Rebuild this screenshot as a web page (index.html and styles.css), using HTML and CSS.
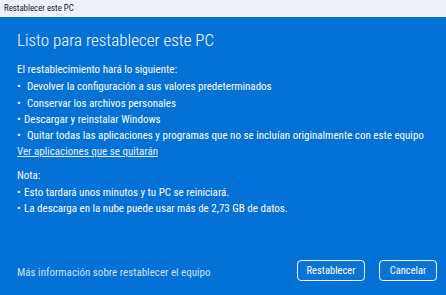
FILE: index.html
```html
<!DOCTYPE html>
<html lang="es">
<head>
<meta charset="utf-8">
<title>Restablecer este PC</title>
<link rel="stylesheet" href="styles.css">
</head>
<body>
	<div class="titlebar">Restablecer este PC</div>
	<div class="dialog">
		<div class="content">
			<h1>Listo para restablecer este PC</h1>
			<p>El restablecimiento hará lo siguiente:</p>
			<ul>
				<li class="wide">Devolver la configuración a sus valores predeterminados</li>
				<li class="wide">Conservar los archivos personales</li>
				<li>Descargar y reinstalar Windows</li>
				<li class="wide">Quitar todas las aplicaciones y programas que no se incluían originalmente con este equipo</li>
			</ul>
			<a class="link" href="#">Ver aplicaciones que se quitarán</a>
			<p class="note">Nota:</p>
			<ul>
				<li>Esto tardará unos minutos y tu PC se reiniciará.</li>
				<li>La descarga en la nube puede usar más de 2,73 GB de datos.</li>
			</ul>
		</div>
		<div class="footer">
			<a class="more" href="#">Más información sobre restablecer el equipo</a>
			<div class="buttons">
				<button class="btn reset">Restablecer</button>
				<button class="btn cancel">Cancelar</button>
			</div>
		</div>
	</div>
</body>
</html>
```
FILE: styles.css
```css
*{margin:0;padding:0;box-sizing:border-box;}
html,body{height:100%;}
body{font-family:"Roboto Condensed","Roboto",sans-serif;background:#0371d5;color:#fff;display:flex;flex-direction:column;}
.titlebar{height:17px;background:#eef2f8;color:#1a1a1a;font-size:8.8px;line-height:17px;padding-left:4px;}
.dialog{flex:1;display:flex;flex-direction:column;padding:0 17px;}
.content{flex:1;}
h1{font-weight:300;font-size:17px;line-height:26px;margin-top:10px;margin-bottom:9px;}
p,li,.link{font-size:11px;line-height:16.3px;}
ul{list-style:none;}
p+ul{margin-top:1px;}
li{padding-left:7px;position:relative;}
li.wide{padding-left:10px;}
li::before{content:"•";position:absolute;left:0;}
.link{color:#e6f0fb;display:block;}
.note{margin-top:7px;}
.footer{height:46px;display:flex;align-items:center;justify-content:space-between;padding-bottom:3px;}
.more{font-size:11px;color:#cfe2f6;text-decoration:none;padding-top:3px;}
.buttons{display:flex;gap:14px;margin-right:-8px;}
.btn{height:21px;border:1.5px solid #fff;border-radius:4px;background:#0a74d6;color:#fff;font-family:inherit;font-size:10.5px;}
.reset{width:68px;}
.cancel{width:58px;}
```
